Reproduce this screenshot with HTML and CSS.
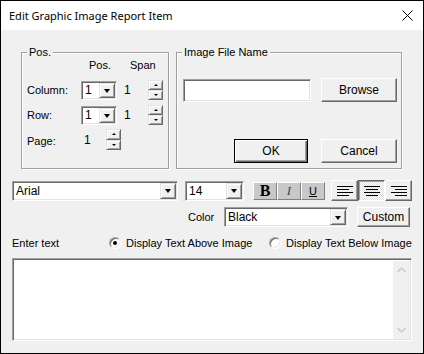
FILE: index.html
```html
<!DOCTYPE html>
<html>
<head>
<meta charset="utf-8">
<link rel="stylesheet" href="styles.css">
</head>
<body>
<div class="window">
  <div class="titlebar">
    <span class="title">Edit Graphic Image Report Item</span>
    <svg class="close" width="11" height="11" viewBox="0 0 11 11"><path d="M0.5 0.5 L10.5 10.5 M10.5 0.5 L0.5 10.5" stroke="#000" stroke-width="1" fill="none"/></svg>
  </div>
  <div class="body">
    <div class="groups">
      <div class="group group-pos">
        <span class="group-title">Pos.</span>
        <div class="pos-grid">
          <span></span><span class="hdr hdr-pos">Pos.</span><span class="hdr hdr-span">Span</span>
          <span class="lbl">Column:</span>
          <div class="combo combo-pos"><span class="combo-text">1</span><span class="dd"><i class="arrow-down"></i></span></div>
          <span class="val">1</span>
          <div class="spin"><span class="spin-btn"><i class="tri-up"></i></span><span class="spin-btn"><i class="tri-down"></i></span></div>
          <span class="lbl">Row:</span>
          <div class="combo combo-pos"><span class="combo-text">1</span><span class="dd"><i class="arrow-down"></i></span></div>
          <span class="val">1</span>
          <div class="spin"><span class="spin-btn"><i class="tri-up"></i></span><span class="spin-btn"><i class="tri-down"></i></span></div>
        </div>
        <div class="page-row">
          <span class="page-lbl">Page:</span>
          <span class="page-val">1</span>
          <div class="spin spin-tall"><span class="spin-btn"><i class="tri-up"></i></span><span class="spin-btn"><i class="tri-down"></i></span></div>
        </div>
      </div>
      <div class="group group-img">
        <span class="group-title">Image File Name</span>
        <div class="file-row">
          <div class="sunken file-input"></div>
          <div class="btn">Browse</div>
        </div>
        <div class="btn-row">
          <div class="btn btn-default">OK</div>
          <div class="btn">Cancel</div>
        </div>
      </div>
    </div>

    <div class="font-row">
      <div class="combo combo-font"><span class="combo-text">Arial</span><span class="dd"><i class="arrow-down"></i></span></div>
      <div class="combo combo-size"><span class="combo-text">14</span><span class="dd"><i class="arrow-down"></i></span></div>
      <div class="fmt">
        <span class="fbtn fb-b">B</span>
        <span class="fbtn fb-i">I</span>
        <span class="fbtn fb-u">U</span>
      </div>
      <div class="align">
        <span class="abtn"><svg width="16" height="11" viewBox="0 0 16 11"><path d="M0 1.5H16M0 4.5H12M0 7.5H16M0 10.5H12" stroke="#000"/></svg></span>
        <span class="abtn abtn-on"><svg width="16" height="11" viewBox="0 0 16 11"><path d="M0 1.5H16M2 4.5H14M0 7.5H16M2 10.5H14" stroke="#000"/></svg></span>
        <span class="abtn"><svg width="16" height="11" viewBox="0 0 16 11"><path d="M0 1.5H16M4 4.5H16M0 7.5H16M4 10.5H16" stroke="#000"/></svg></span>
      </div>
    </div>

    <div class="color-row">
      <span class="color-lbl">Color</span>
      <div class="combo combo-color"><span class="combo-text">Black</span><span class="dd"><i class="arrow-down"></i></span></div>
      <div class="btn btn-custom">Custom</div>
    </div>

    <div class="text-row">
      <span class="enter-lbl">Enter text</span>
      <label class="radio radio-1"><span class="radio-circle checked"></span>Display Text Above Image</label>
      <label class="radio"><span class="radio-circle"></span>Display Text Below Image</label>
    </div>

    <div class="sunken textarea">
      <div class="text-content"></div>
      <div class="scrollbar">
        <svg width="9" height="6" viewBox="0 0 9 6"><path d="M0.5 5 L4.5 1 L8.5 5" stroke="#c3c3c3" stroke-width="1.2" fill="none"/></svg>
        <svg width="9" height="6" viewBox="0 0 9 6"><path d="M0.5 1 L4.5 5 L8.5 1" stroke="#c3c3c3" stroke-width="1.2" fill="none"/></svg>
      </div>
    </div>
  </div>
</div>
</body>
</html>
```

FILE: styles.css
```css
* { box-sizing: border-box; }
body { margin: 0; background: #fff; }

.window {
  width: 424px;
  height: 354px;
  border: 1px solid #000;
  background: #f0f0f0;
  font-family: "Liberation Sans", Arial, sans-serif;
  font-size: 11px;
  color: #000;
  display: flex;
  flex-direction: column;
}

.titlebar {
  height: 29px;
  flex: none;
  background: #fff;
  display: flex;
  align-items: center;
  padding: 0 10px 0 8px;
}
.title {
  flex: 1;
  font-family: "Noto Sans", "Open Sans", sans-serif;
  font-size: 11px;
  color: #000;
}
.close { display: block; }

.body { padding-left: 11px; }

/* Group boxes */
.groups {
  display: flex;
  gap: 7px;
  margin: 22px 0 0 9px;
}
.group {
  position: relative;
  height: 117px;
  border: 1px solid #a0a0a0;
  box-shadow: 1px 1px 0 #fff, inset 1px 1px 0 #fff;
}
.group-title {
  position: absolute;
  top: -7px;
  left: 5px;
  padding: 0 2px;
  line-height: 13px;
  background: #f0f0f0;
}
.group-pos { width: 148px; padding: 6px 0 0 5px; }
.group-img { width: 226px; padding: 25px 0 0 6px; }

.pos-grid {
  display: grid;
  grid-template-columns: 54px 36px 31px 15px;
  grid-template-rows: 16px 20px 20px;
  row-gap: 5px;
  align-items: center;
}
.hdr { align-self: start; line-height: 12px; }
.hdr-pos { text-align: center; padding-left: 2px; }
.hdr-span { grid-column: 3 / 5; padding-left: 13px; }
.val { padding-left: 7px; font-size: 12px; }

.page-row {
  display: flex;
  align-items: center;
  margin-top: 4px;
  height: 21px;
}
.page-lbl { width: 57px; padding-top: 3px; }
.page-val { width: 22px; font-size: 12px; }

/* 3D frames */
.sunken {
  background: #fff;
  border: 1px solid;
  border-color: #a0a0a0 #fff #fff #a0a0a0;
  box-shadow: inset 1px 1px 0 #696969, inset -1px -1px 0 #e3e3e3;
}

.combo {
  display: flex;
  align-items: stretch;
  height: 20px;
  background: #fff;
  border: 1px solid;
  border-color: #a0a0a0 #fff #fff #a0a0a0;
  box-shadow: inset 1px 1px 0 #696969, inset -1px -1px 0 #e3e3e3;
  padding: 1px;
}
.combo-text {
  flex: 1;
  display: flex;
  align-items: center;
  padding-left: 2px;
  font-size: 12px;
}
.combo-pos { width: 36px; height: 19px; }
.dd {
  width: 16px;
  flex: none;
  background: #f0f0f0;
  border: 1px solid;
  border-color: #e3e3e3 #696969 #696969 #e3e3e3;
  box-shadow: inset 1px 1px 0 #fff, inset -1px -1px 0 #a0a0a0;
  display: flex;
  align-items: center;
  justify-content: center;
}
.arrow-down {
  display: block;
  width: 0;
  height: 0;
  border-left: 3.5px solid transparent;
  border-right: 3.5px solid transparent;
  border-top: 4px solid #000;
  margin-top: 1px;
}

.spin { display: flex; flex-direction: column; width: 15px; height: 20px; }
.spin-tall { height: 21px; }
.spin-btn {
  flex: 1;
  background: #f0f0f0;
  border: 1px solid;
  border-color: #e3e3e3 #696969 #696969 #e3e3e3;
  box-shadow: inset 1px 1px 0 #fff, inset -1px -1px 0 #a0a0a0;
  display: flex;
  align-items: center;
  justify-content: center;
}
.tri-up, .tri-down {
  display: block;
  width: 0;
  height: 0;
  border-left: 2px solid transparent;
  border-right: 2px solid transparent;
}
.tri-up { border-bottom: 2px solid #000; }
.tri-down { border-top: 2px solid #000; }

/* Buttons */
.btn {
  width: 76px;
  height: 24px;
  display: flex;
  align-items: center;
  justify-content: center;
  background: #f0f0f0;
  border: 1px solid;
  border-color: #fff #696969 #696969 #fff;
  box-shadow: inset -1px -1px 0 #a0a0a0;
  font-size: 12px;
}
.btn-default {
  width: 74px;
  border: 1px solid #000;
  box-shadow: inset 1px 1px 0 #fff, inset -1px -1px 0 #696969, inset -2px -2px 0 #a0a0a0;
}

.file-row { display: flex; align-items: center; gap: 10px; }
.file-input { width: 128px; height: 23px; margin-top: 1px; }
.btn-row { display: flex; gap: 13px; margin: 37px 0 0 51px; }

/* Font row */
.font-row {
  display: flex;
  align-items: center;
  height: 21px;
  margin-top: 11px;
}
.combo-font { width: 166px; }
.combo-size { width: 59px; margin-left: 7px; }
.fmt { display: flex; margin-left: 9px; }
.fbtn {
  width: 24px;
  height: 18px;
  display: flex;
  align-items: center;
  justify-content: center;
  background: #c8c8c8;
  border: 1px solid;
  border-color: #fff #808080 #808080 #fff;
}
.fb-b { font-family: "Liberation Serif", serif; font-weight: bold; font-size: 16px; }
.fb-i { font-family: "Liberation Serif", serif; font-style: italic; font-weight: normal; font-size: 13px; color: #444; }
.fb-u { font-family: "Liberation Sans", sans-serif; font-size: 11px; text-decoration: underline; }

.align { display: flex; margin-left: 6px; }
.abtn {
  width: 27px;
  height: 21px;
  display: flex;
  align-items: center;
  justify-content: center;
  background: #f0f0f0;
  border: 1px solid;
  border-color: #fff #696969 #696969 #fff;
  box-shadow: inset -1px -1px 0 #a0a0a0;
}
.abtn svg { display: block; }
.abtn-on {
  border-color: #696969 #fff #fff #696969;
  box-shadow: inset 1px 1px 0 #a0a0a0;
  background: repeating-conic-gradient(#fff 0 25%, #dcdcdc 0 50%) 0 0 / 2px 2px;
}

/* Color row */
.color-row {
  display: flex;
  align-items: center;
  height: 20px;
  margin-top: 6px;
}
.color-lbl { margin-left: 176px; width: 36px; }
.combo-color { width: 124px; }
.btn-custom { width: 53px; height: 20px; margin-left: 9px; }

/* Text row */
.text-row {
  display: flex;
  align-items: center;
  height: 14px;
  margin-top: 9px;
}
.enter-lbl { width: 97px; }
.radio { display: flex; align-items: center; gap: 5px; }
.radio-1 { width: 160px; }
.radio-circle {
  width: 12px;
  height: 12px;
  border-radius: 50%;
  background: #fff;
  border: 1px solid;
  border-color: #a0a0a0 #fff #fff #a0a0a0;
  box-shadow: inset 1px 1px 0 #696969, inset -1px -1px 0 #e3e3e3;
  display: flex;
  align-items: center;
  justify-content: center;
}
.radio-circle.checked::after {
  content: "";
  width: 4px;
  height: 4px;
  border-radius: 50%;
  background: #000;
}

/* Text area */
.textarea {
  width: 400px;
  height: 83px;
  margin-top: 8px;
  display: flex;
  padding: 2px 1px 1px 2px;
}
.text-content { flex: 1; }
.scrollbar {
  width: 17px;
  background: #f0f0f0;
  display: flex;
  flex-direction: column;
  justify-content: space-between;
  align-items: center;
  padding: 6px 0;
}
.scrollbar svg { display: block; }
```
